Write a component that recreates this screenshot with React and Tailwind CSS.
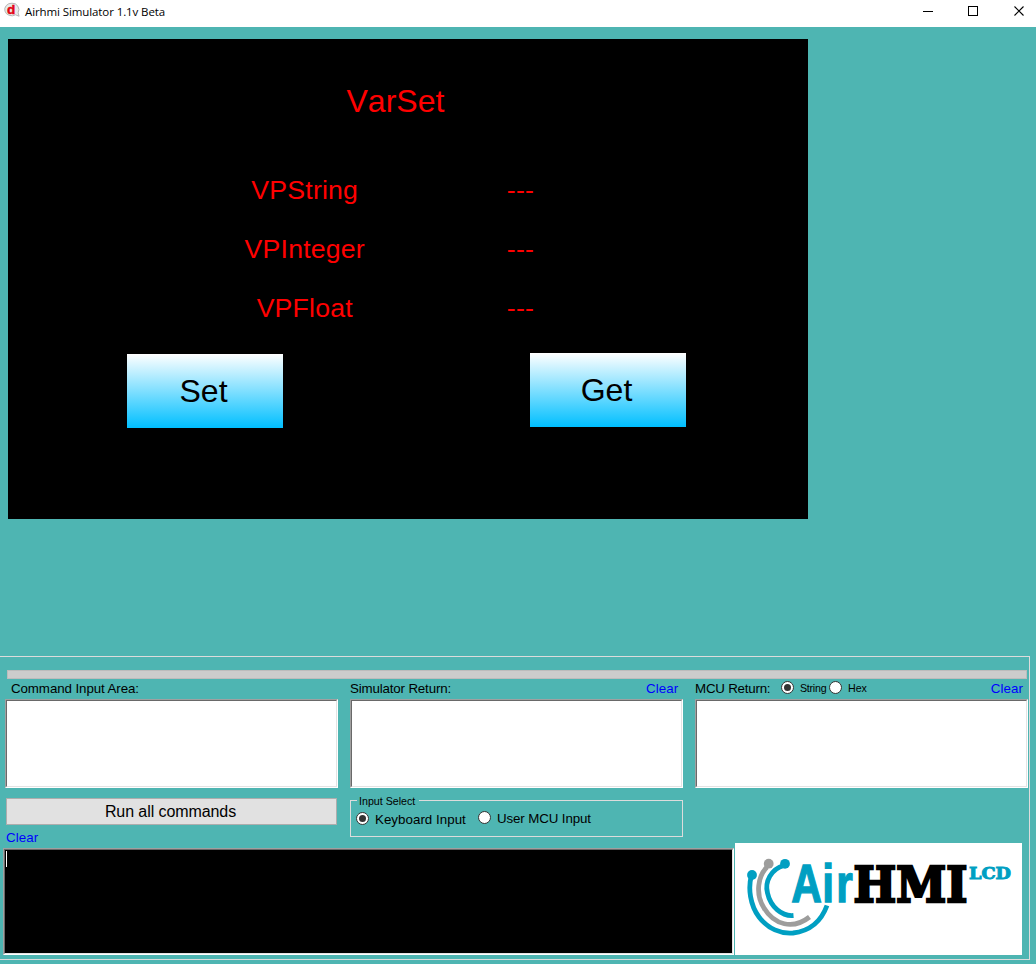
import React from "react";

const sans = "font-['Liberation_Sans',Arial,sans-serif]";

function Radio({ checked, className = "" }) {
  return (
    <span className={`block h-[13px] w-[13px] shrink-0 rounded-full border border-[#333333] bg-white p-[2px] ${className}`}>
      {checked && <span className="block h-[7px] w-[7px] rounded-full bg-[#333333]" />}
    </span>
  );
}

function SunkenBox({ className = "", children }) {
  return (
    <div className={`border border-t-[#a0a0a0] border-l-[#a0a0a0] border-r-white border-b-white ${className}`}>
      <div className="h-full w-full border border-t-[#696969] border-l-[#696969] border-r-[#e3e3e3] border-b-[#e3e3e3]">
        {children}
      </div>
    </div>
  );
}

function TitleBar() {
  return (
    <header className="flex h-[27px] shrink-0 bg-white">
      <svg className="mt-[2px] ml-[4px] h-[16px] w-[17px]" viewBox="0 0 17 16">
        <path d="M8 1.200a7 6.300 0 1 0 3.500 11.600l3.600 1.400-1-3.400A6.500 6.500 0 0 0 8 1.200z" fill="#e9eaea" stroke="#b5b5b5" strokeWidth="1" />
        <text x="3" y="12.300" fontFamily="Liberation Sans, sans-serif" fontWeight="700" fontSize="13.500" fill="#e30613" stroke="#e30613" strokeWidth=".5">d</text>
      </svg>
      <span className="mt-[4px] ml-[4px] h-4 w-[141px] whitespace-nowrap font-['Open_Sans',sans-serif] text-[11.5px] leading-4 tracking-[-0.1px] text-black">
        Airhmi Simulator 1.1v Beta
      </span>
      <svg className="ml-auto h-[27px] w-[120px]" viewBox="0 0 120 27" fill="none" stroke="#000" strokeWidth="1">
        <path d="M7 11.5h10M52.5 6.5h9v9h-9z" shapeRendering="crispEdges" />
        <path d="M98.5 6.5l9 9M107.5 6.5l-9 9" strokeWidth="1.1" />
      </svg>
    </header>
  );
}

function ValueRow({ label }) {
  return (
    <div className="flex h-[59px] items-center text-[26.67px] leading-[30px]">
      <span className="w-[199.500px] text-center tracking-[0.2px]">{label}</span>
      <span className="ml-[16px] w-[200px] text-center tracking-[0.250px]">---</span>
    </div>
  );
}

function Display() {
  return (
    <section className="mt-[12px] ml-[8px] h-[480px] w-[800px] bg-black text-[#ff0000]">
      <h1 className="ml-[338.5px] pt-[44px] text-[32px] leading-[36px] [font-kerning:none]">VarSet</h1>
      <div className="mt-[41px] ml-[197px] [font-kerning:none]">
        <ValueRow label="VPString" />
        <ValueRow label="VPInteger" />
        <ValueRow label="VPFloat" />
      </div>
      <div className="mt-[16px] ml-[119px] flex text-[32px] text-black">
        <button className="mt-px h-[74px] w-[156px] bg-linear-to-b/srgb from-white to-[#00bfff] pr-[3px]">Set</button>
        <button className="ml-[247px] h-[74px] w-[156px] bg-linear-to-b/srgb from-white to-[#00bfff] pr-[3px]">Get</button>
      </div>
    </section>
  );
}

function Logo() {
  return (
    <svg className="h-[112px] w-[287px] bg-white" viewBox="0 0 287 112">
      <g fill="none" strokeWidth="4.8">
        <path d="M16.3 33C13 45 15 62 24 74C33 86 46 91 58 90C75 88 86 79 92 62.5" stroke="#009fc2" />
        <path d="M32 24C23 33 20 51 29 65C39 82 58 87 74.500 74" stroke="#9d9d9c" />
        <path d="M49 22.500C36 26 29.500 39 32.500 50C35.500 64 47 73.500 58.500 72.500" stroke="#009fc2" />
      </g>
      <circle cx="17" cy="32" r="4.900" fill="#009fc2" />
      <circle cx="33.700" cy="20.700" r="4.900" fill="#9d9d9c" />
      <circle cx="50" cy="20.800" r="4.900" fill="#009fc2" />
      <g transform="scale(.8 1)" fontFamily="Liberation Sans, sans-serif" fontWeight="700" fontSize="53" fill="#009fc2" stroke="#009fc2" strokeWidth="1.300">
        <text x="70.300 109 126.500" y="59">Air</text>
      </g>
      <g transform="translate(118.600 58.600) scale(.94 1)" fontFamily="DejaVu Serif, serif" fontWeight="700" fontSize="48" fill="#000" stroke="#000" strokeWidth="2.600">
        <text x="0" y="0">HMI</text>
      </g>
      <text x="234" y="36" fontFamily="DejaVu Serif, serif" fontWeight="700" fontSize="17.500" textLength="42" lengthAdjust="spacingAndGlyphs" fill="#009fc2" stroke="#009fc2" strokeWidth="1">LCD</text>
    </svg>
  );
}

function Console() {
  return (
    <section className="mt-[137px] h-[304px] w-[1030px] border-t border-r border-b border-[#dcdcdc] text-[13.33px] leading-[16px] text-black">
      <div className="mt-[13px] ml-[7px] h-[9px] w-[1020px] border border-[#bcbcbc] bg-[#cccccc]" />
      <div className="flex h-[20px] pt-[2px] whitespace-nowrap">
        <span className="ml-[11px] w-[339px] tracking-[-0.090px]">Command Input Area:</span>
        <span className="w-[296px] tracking-[-0.160px]">Simulator Return:</span>
        <span className="w-[49px] tracking-[0.080px] text-[#0000ff]">Clear</span>
        <span className="w-[86px] tracking-[-0.220px]">MCU Return:</span>
        <Radio checked />
        <span className="-mt-px ml-[6px] w-[29px] text-[10.670px] tracking-[-0.250px]">String</span>
        <Radio />
        <span className="-mt-px ml-[6px] text-[10.670px]">Hex</span>
        <span className="mr-[6px] ml-auto tracking-[0.080px] text-[#0000ff]">Clear</span>
      </div>
      <div className="ml-[5px] flex gap-[12px]">
        <SunkenBox className="h-[89px] w-[333px] bg-white" />
        <SunkenBox className="h-[89px] w-[333px] bg-white" />
        <SunkenBox className="h-[89px] w-[333px] bg-white" />
      </div>
      <div className="flex h-[55px]">
        <div className="w-[350px] pt-[10px] pl-[6px]">
          <button className="block h-[27px] w-[331px] border border-[#adadad] bg-[#e1e1e1] pr-[2px] text-[16px] leading-[24px] tracking-[-0.080px]">
            Run all commands
          </button>
          <span className="mt-[5px] block tracking-[0.080px] text-[#0000ff]">Clear</span>
        </div>
        <fieldset className="mt-[6px] h-[43px] w-[333px] border border-[#dcdcdc]">
          <legend className="ml-[6px] h-[13px] w-[62px] whitespace-nowrap pl-[2px] text-[10.670px] leading-[14px]">Input Select</legend>
          <div className="flex whitespace-nowrap">
            <Radio checked className="mt-[5px] ml-[5px]" />
            <span className="mt-[5px] ml-[6px] w-[103px] tracking-[0.030px]">Keyboard Input</span>
            <Radio className="mt-[4px]" />
            <span className="mt-[4px] ml-[6px] tracking-[-0.120px]">User MCU Input</span>
          </div>
        </fieldset>
      </div>
      <div className="ml-[3px] flex">
        <SunkenBox className="mt-[5px] h-[107px] w-[731px] bg-black">
          <div className="pt-px pl-px">
            <div className="h-[16px] w-px bg-white" />
          </div>
        </SunkenBox>
        <div className="ml-[1px]">
          <Logo />
        </div>
      </div>
    </section>
  );
}

export default function App() {
  return (
    <main className={`flex h-[964px] w-[1036px] flex-col overflow-hidden bg-[#4eb5b2] ${sans}`}>
      <TitleBar />
      <Display />
      <Console />
    </main>
  );
}
